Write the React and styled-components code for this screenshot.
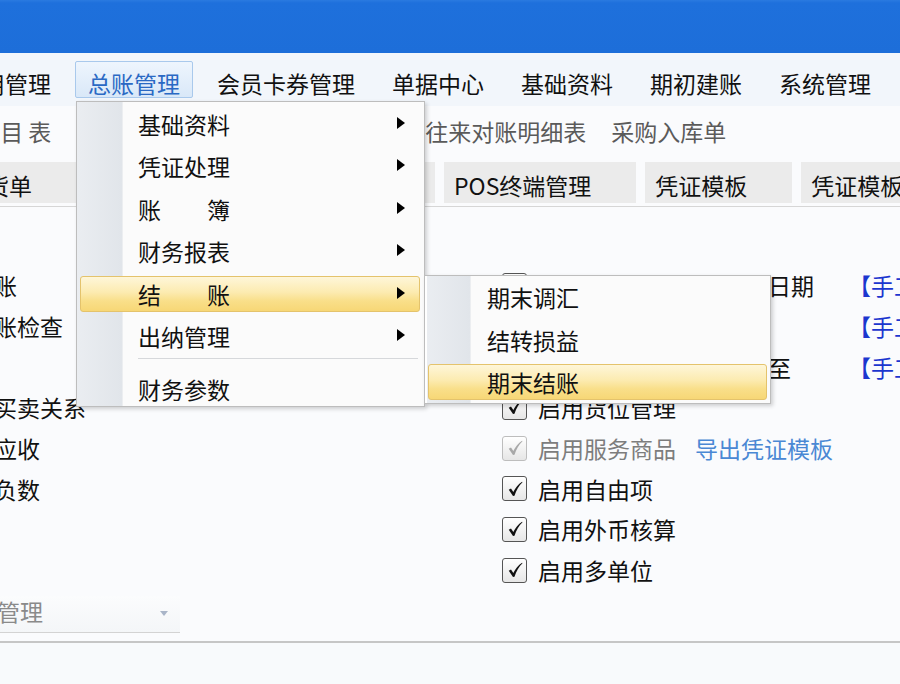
import React from "react";
import styled, { createGlobalStyle, css } from "styled-components";

const GlobalStyle = createGlobalStyle`
  html, body { margin: 0; padding: 0; overflow: hidden; background: #fafbfd; }
  body { font-family: "Noto Sans CJK SC", "Noto Sans", sans-serif; }
  * { box-sizing: border-box; }
`;

const Page = styled.div`
  width: 900px;
  height: 684px;
  overflow: hidden;
  display: flex;
  flex-direction: column;
  background: #fafbfd;
  color: #111;
  font-size: 23px;
`;

const TitleBar = styled.div`
  height: 53px;
  flex: none;
  background: linear-gradient(to bottom, #2a7ae0 0, #1e70dc 3px, #1d6ed9 100%);
`;

const MenuBar = styled.div`
  height: 53px;
  flex: none;
  display: flex;
  align-items: center;
  gap: 11px;
  background: #f2f6fb;
  position: relative;
  z-index: 5;
`;

const MenuBarItem = styled.div`
  position: relative;
  flex: none;
  height: 37px;
  line-height: 27px;
  padding: 8px 12px 0;
  border: 1px solid transparent;
  white-space: nowrap;
  ${(p) => p.$first && css`margin-left: -54px;`}
  ${(p) =>
    p.$active &&
    css`
      border-color: #a9c9ec;
      background: linear-gradient(to bottom, #eef5fd, #d9e8f8);
      color: #2a69c4;
      border-radius: 2px;
    `}
`;

const Dropdown = styled.div`
  position: absolute;
  top: calc(100% + 4px);
  left: 0;
  width: 349px;
  z-index: 20;
  color: #111;
  line-height: normal;
`;

const MenuPanel = styled.div`
  width: ${(p) => p.$width}px;
  height: ${(p) => p.$height}px;
  overflow: hidden;
  display: flex;
  flex-direction: column;
  padding-top: ${(p) => p.$padTop}px;
  border: 1px solid #bdbdbd;
  box-shadow: 2px 2px 4px rgba(0, 0, 0, 0.18);
  background: linear-gradient(
    to right,
    #ffffff 0,
    #ffffff ${(p) => p.$stripStart}px,
    #eaedf1 ${(p) => p.$stripStart}px,
    #e1e5ea ${(p) => p.$stripEnd - 1}px,
    #dde1e6 ${(p) => p.$stripEnd - 1}px,
    #fbfbfb ${(p) => p.$stripEnd}px,
    #fbfbfb 100%
  );
`;

const SubMenuWrap = styled.div`
  position: absolute;
  left: 348px;
  top: 174px;
  z-index: 21;
`;

const MenuRow = styled.div`
  flex: none;
  position: relative;
  height: 36px;
  margin: 3.25px ${(p) => p.$mr}px 3.25px 3px;
  padding-left: ${(p) => p.$indent}px;
  display: flex;
  align-items: center;
  border: 1px solid transparent;
  border-radius: 3px;
  white-space: nowrap;
  ${(p) =>
    p.$hot &&
    css`
      border-color: #e4c36c;
      background: linear-gradient(to bottom, #fef6d9 0%, #fcebb0 45%, #f9df8a 70%, #f7d776 100%);
    `}
`;

const Arrow = styled.span`
  position: absolute;
  right: 14px;
  top: 50%;
  margin-top: -7px;
  width: 0;
  height: 0;
  border-top: 6px solid transparent;
  border-bottom: 6px solid transparent;
  border-left: 8px solid #000;
`;

const Separator = styled.div`
  flex: none;
  height: 1px;
  margin: 0 6px 9px 61px;
  background: #d6d8db;
`;

const Toolbar = styled.div`
  height: 56px;
  flex: none;
  display: flex;
  align-items: center;
  gap: 25px;
  padding-bottom: 7px;
  color: #5a5a5a;
  white-space: nowrap;
`;

const ToolItem = styled.span`
  flex: none;
  ${(p) => p.$first && css`margin-left: -28px;`}
`;

const TabBar = styled.div`
  height: 45px;
  flex: none;
  display: flex;
  align-items: flex-start;
  gap: 9px;
  border-bottom: 1px solid #d6d6d6;
  white-space: nowrap;
`;

const Tab = styled.div`
  flex: none;
  height: 41px;
  padding: 5px 45px 0 10px;
  line-height: 36px;
  background: #ebebeb;
  ${(p) => p.$first && css`margin-left: -47px;`}
`;

const Content = styled.div`
  flex: none;
  display: grid;
  grid-template-columns: 554px 1fr;
  margin-left: -52px;
  padding-top: 58px;
`;

const Column = styled.div`
  display: flex;
  flex-direction: column;
`;

const LeftRow = styled.div`
  height: 40.7px;
  display: flex;
  align-items: center;
  white-space: nowrap;
`;

const OptionRow = styled.div`
  height: 40.7px;
  display: grid;
  grid-template-columns: 36px 310px auto;
  align-items: center;
  white-space: nowrap;
`;

const OptionLabel = styled.span`
  display: flex;
  align-items: center;
  gap: 19px;
  color: ${(p) => (p.$disabled ? "#7d7d7d" : "#111")};
`;

const Link = styled.span`
  color: #4a88d4;
`;

const Tag = styled.span`
  color: #1b36cf;
`;

const Box = styled.span`
  width: 25px;
  height: 25px;
  border: 1.5px solid ${(p) => (p.$disabled ? "#bdbdbd" : "#555")};
  border-radius: 3px;
  background: linear-gradient(to bottom, #ffffff, #e6e6e6);
  display: flex;
  align-items: center;
  justify-content: center;
`;

const Footer = styled.div`
  flex: none;
  margin-top: 5px;
  height: 37px;
  display: flex;
`;

const Select = styled.div`
  margin-left: -60px;
  width: 240px;
  height: 37px;
  padding: 0 0 5px 11px;
  display: flex;
  align-items: center;
  justify-content: space-between;
  color: #8a8a8a;
  border-bottom: 1px solid #d3d3d3;
  background: linear-gradient(to bottom, #fbfcfd, #f4f6f8);
  white-space: nowrap;
`;

const Caret = styled.span`
  width: 0;
  height: 0;
  margin-right: 12px;
  margin-top: 4px;
  border-left: 4px solid transparent;
  border-right: 4px solid transparent;
  border-top: 5px solid #a9b5c8;
`;

const Divider = styled.div`
  flex: none;
  margin-top: 8px;
  height: 2px;
  background: #c6c6c6;
`;

const Bottom = styled.div`
  flex: 1;
  background: #f8fafc;
`;

function Check({ disabled }) {
  return (
    <Box $disabled={disabled}>
      <svg width="20" height="20" viewBox="0 0 24 24">
        <path
          d="M4.5 12.8 L7.2 11.3 L10 15.6 C12.6 10.2 15.8 6.2 20.5 3.2 L21 4 C16.6 8.2 13.6 13.4 11.4 20.2 L9.6 20.4 Z"
          fill={disabled ? "#a8a8a8" : "#111"}
        />
      </svg>
    </Box>
  );
}

const mainItems = [
  { label: "基础资料", sub: true },
  { label: "凭证处理", sub: true },
  { label: "账　　簿", sub: true },
  { label: "财务报表", sub: true },
  { label: "结　　账", sub: true, hot: true },
  { label: "出纳管理", sub: true },
  { sep: true },
  { label: "财务参数" },
];

const subItems = [
  { label: "期末调汇" },
  { label: "结转损益" },
  { label: "期末结账", hot: true },
];

function AccountMenu() {
  return (
    <Dropdown>
      <MenuPanel $width={349} $height={306} $padTop={0.5} $stripStart={0} $stripEnd={46}>
        {mainItems.map((it, i) =>
          it.sep ? (
            <Separator key={i} />
          ) : (
            <MenuRow key={i} $hot={it.hot} $indent={57} $mr={4}>
              {it.label}
              {it.sub && <Arrow />}
            </MenuRow>
          )
        )}
      </MenuPanel>
      <SubMenuWrap>
        <MenuPanel $width={347} $height={129} $padTop={-1} $stripStart={2} $stripEnd={46}>
          {subItems.map((it, i) => (
            <MenuRow key={i} $hot={it.hot} $indent={58} $mr={3}>
              {it.label}
            </MenuRow>
          ))}
        </MenuPanel>
      </SubMenuWrap>
    </Dropdown>
  );
}

const menus = ["费用管理", "总账管理", "会员卡券管理", "单据中心", "基础资料", "期初建账", "系统管理"];
const tools = ["科 目 表", "资产负债表", "往来单位余额汇总", "往来对账明细表", "采购入库单"];
const tabs = ["进货单", "销售订单", "收款单据管理", "POS终端管理", "凭证模板", "凭证模板"];
const leftRows = ["月结账", "出纳账检查", "", "区分买卖关系", "冲抵应收", "允许负数"];
const options = [
  { label: "非本会计期间凭证录入日期", tag: "【手工】" },
  { label: "凭证审核后自动记账", tag: "【手工】" },
  { label: "凭证录入日期允许修改至", tag: "【手工】" },
  { label: "启用货位管理" },
  { label: "启用服务商品", disabled: true, link: "导出凭证模板" },
  { label: "启用自由项" },
  { label: "启用外币核算" },
  { label: "启用多单位" },
];

export default function App() {
  return (
    <>
      <GlobalStyle />
      <Page>
        <TitleBar />
        <MenuBar>
          {menus.map((m, i) => (
            <MenuBarItem key={i} $first={i === 0} $active={i === 1}>
              {m}
              {i === 1 && <AccountMenu />}
            </MenuBarItem>
          ))}
        </MenuBar>
        <Toolbar>
          {tools.map((t, i) => (
            <ToolItem key={i} $first={i === 0}>
              {t}
            </ToolItem>
          ))}
        </Toolbar>
        <TabBar>
          {tabs.map((t, i) => (
            <Tab key={i} $first={i === 0}>
              {t}
            </Tab>
          ))}
        </TabBar>
        <Content>
          <Column>
            {leftRows.map((r, i) => (
              <LeftRow key={i}>{r}</LeftRow>
            ))}
          </Column>
          <Column>
            {options.map((o, i) => (
              <OptionRow key={i}>
                <Check disabled={o.disabled} />
                <OptionLabel $disabled={o.disabled}>
                  {o.label}
                  {o.link && <Link>{o.link}</Link>}
                </OptionLabel>
                {o.tag ? <Tag>{o.tag}</Tag> : <span />}
              </OptionRow>
            ))}
          </Column>
        </Content>
        <Footer>
          <Select>
            项目管理
            <Caret />
          </Select>
        </Footer>
        <Divider />
        <Bottom />
      </Page>
    </>
  );
}
